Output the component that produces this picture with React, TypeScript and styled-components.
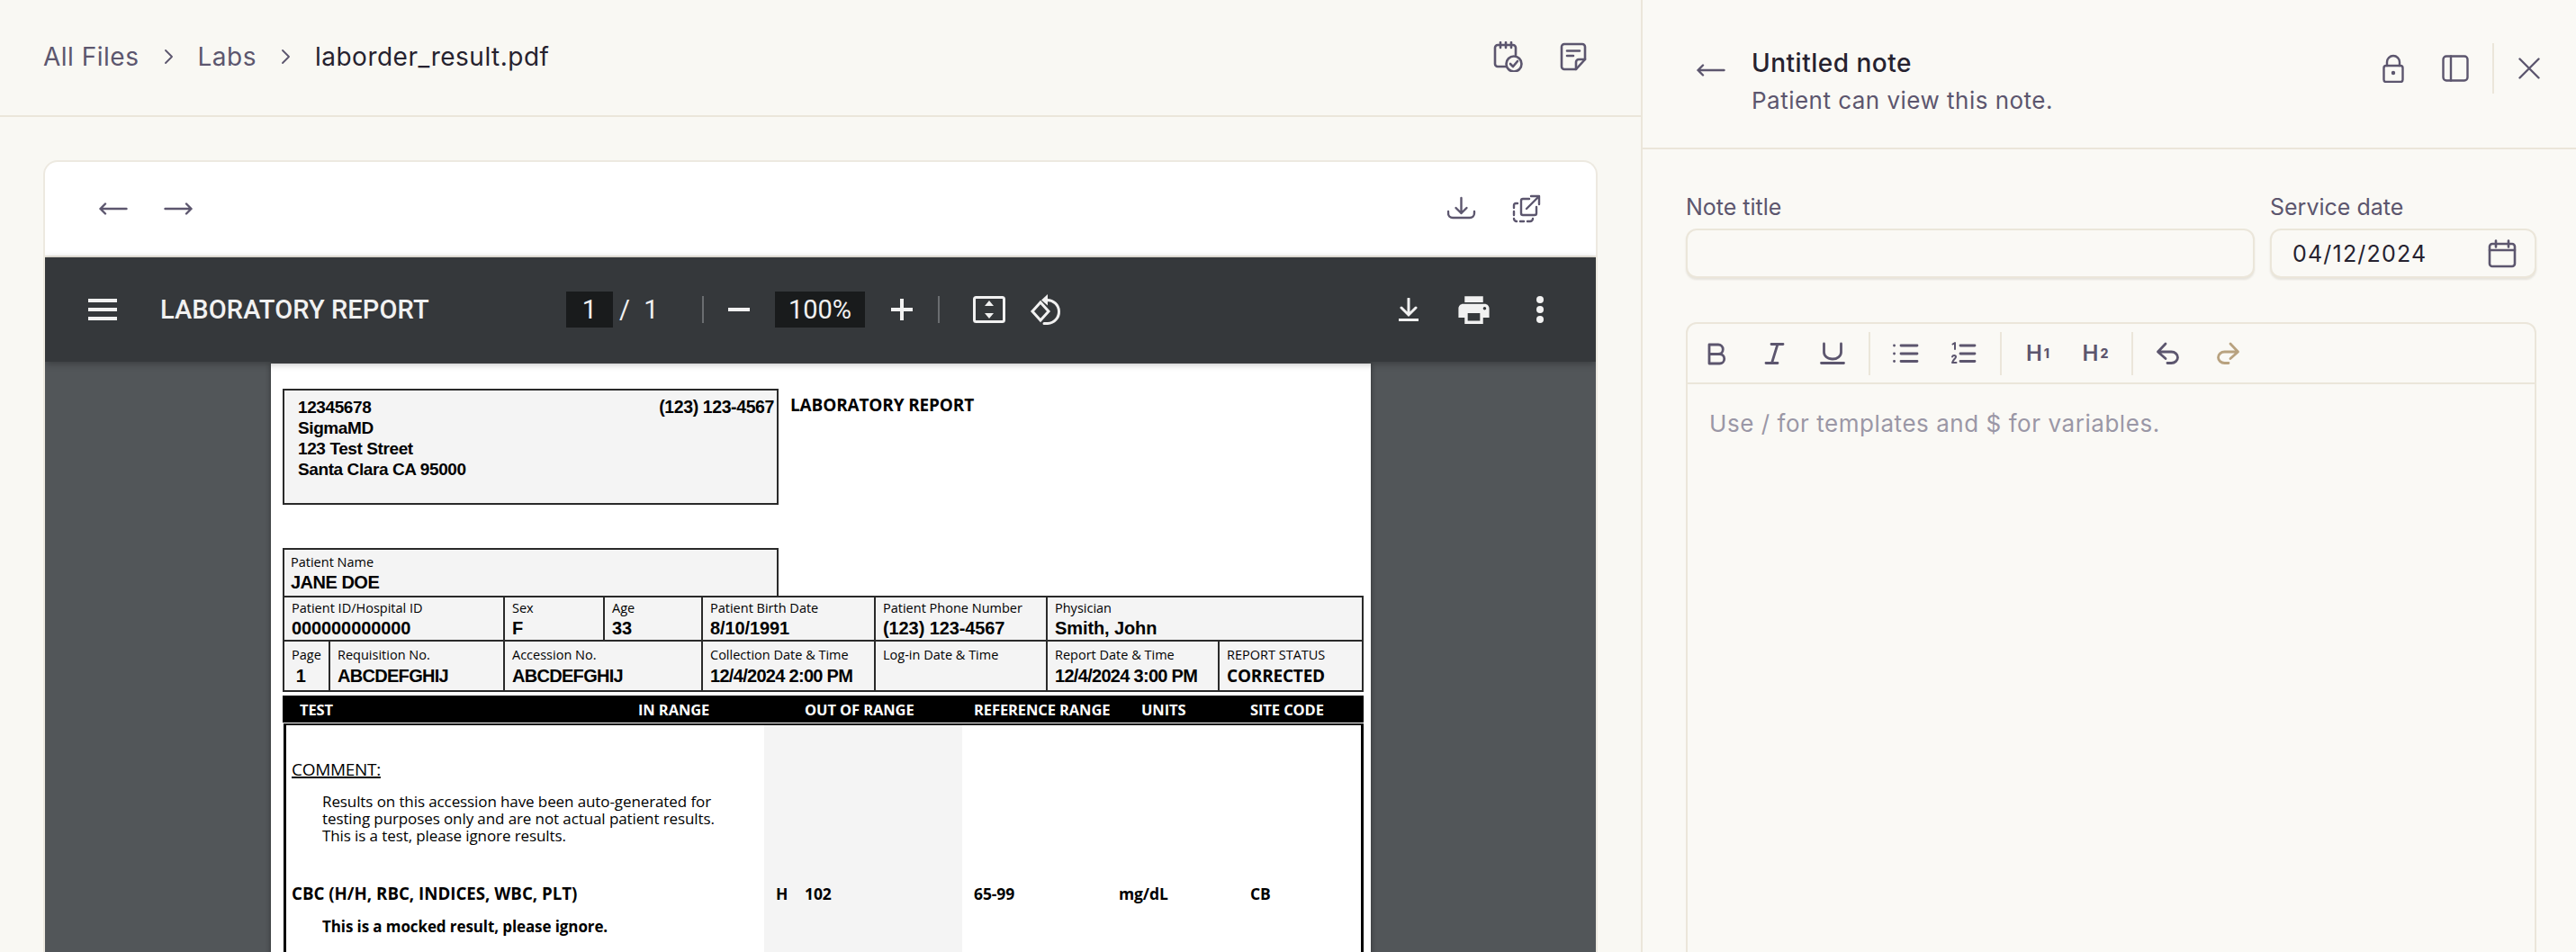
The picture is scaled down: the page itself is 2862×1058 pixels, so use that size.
import React from "react";
import styled, { createGlobalStyle } from "styled-components";

const colors = {
  paneLeft: "#f9f8f3",
  paneRight: "#faf9f5",
  line: "#ebe6da",
  ink: "#26222f",
  muted: "#5c566e",
  hint: "#9a97a6",
  redo: "#b8a27f",
  bar: "#35383b",
  well: "#191b1c",
  viewer: "#525659",
  paper: "#f4f4f4",
  rule: "#2a2a2a",
};

const GlobalStyle = createGlobalStyle`
  html, body {
    margin: 0;
    padding: 0;
    overflow: hidden;
    background: ${colors.paneRight};
    font-family: Inter, "Liberation Sans", sans-serif;
  }
  * { box-sizing: border-box; }
`;

const Page = styled.div`
  display: flex;
  width: 2862px;
  height: 1058px;
  overflow: hidden;
`;

const LeftPane = styled.main`
  display: flex;
  flex-direction: column;
  width: 1823px;
  flex: none;
  background: ${colors.paneLeft};
`;

const FileHeader = styled.header`
  display: flex;
  align-items: center;
  justify-content: space-between;
  height: 130px;
  flex: none;
  padding: 0 59px 2px 48px;
  border-bottom: 2px solid ${colors.line};
`;

const Crumbs = styled.nav`
  display: flex;
  align-items: center;
  gap: 27.5px;
  font-size: 28px;
  letter-spacing: 0.5px;
  color: ${colors.muted};
`;

const Current = styled.span`
  color: ${colors.ink};
`;

const IconRow = styled.div<{ $gap: number }>`
  display: flex;
  align-items: center;
  gap: ${(p) => p.$gap}px;
  color: ${colors.muted};
`;

const Glyph = styled.svg<{ $ml?: number; $wide?: number }>`
  display: block;
  flex: none;
  fill: none;
  stroke: currentColor;
  stroke-width: ${(p) => p.$wide ?? 2.4};
  stroke-linecap: round;
  stroke-linejoin: round;
  margin-left: ${(p) => p.$ml ?? 0}px;
`;

const Card = styled.section`
  display: flex;
  flex-direction: column;
  flex: 1;
  min-height: 0;
  width: 1727px;
  margin: 48px 0 0 48px;
  border: 2px solid #ede9e0;
  border-bottom: 0;
  border-radius: 16px 16px 0 0;
  background: #fff;
  overflow: hidden;
`;

const CardBar = styled.div`
  display: flex;
  align-items: center;
  justify-content: space-between;
  height: 106px;
  flex: none;
  padding: 0 61px 0 60px;
  border-bottom: 2px solid #ede9e0;
  color: ${colors.muted};
`;

const PdfBar = styled.div`
  position: relative;
  z-index: 1;
  display: flex;
  align-items: center;
  height: 116px;
  flex: none;
  padding: 0 57px 0 48px;
  background: ${colors.bar};
  color: #f1f1f1;
  font-family: Roboto, sans-serif;
  box-shadow: 0 2px 8px rgba(0, 0, 0, 0.3);
`;

const PdfTitle = styled.div`
  width: 451px;
  margin-left: 48px;
  flex: none;
  font-size: 29px;
  font-weight: 500;
  letter-spacing: 0.1px;
`;

const Well = styled.div<{ $w: number; $ml?: number }>`
  display: flex;
  align-items: center;
  justify-content: center;
  flex: none;
  width: ${(p) => p.$w}px;
  height: 40px;
  margin-left: ${(p) => p.$ml ?? 0}px;
  background: ${colors.well};
  font-size: 29px;
`;

const PageOf = styled.div`
  width: 99px;
  padding-left: 7px;
  flex: none;
  font-size: 29px;
  word-spacing: 8px;
`;

const BarRule = styled.div<{ $ml?: number }>`
  width: 2px;
  height: 30px;
  flex: none;
  margin-left: ${(p) => p.$ml ?? 0}px;
  background: #6a6d70;
`;

const BarEnd = styled.div`
  display: flex;
  align-items: center;
  margin-left: auto;
`;

const Viewer = styled.div`
  flex: 1;
  min-height: 0;
  padding: 2px 0 0 251px;
  background: ${colors.viewer};
  overflow: hidden;
`;

const Sheet = styled.article`
  width: 1222px;
  height: 700px;
  padding: 28px 8px 0 13px;
  background: #fff;
  color: #000;
  box-shadow: 0 0 6px rgba(0, 0, 0, 0.4);
`;

const SheetTop = styled.div`
  display: flex;
  align-items: flex-start;
`;

const AddressBox = styled.div`
  display: flex;
  justify-content: space-between;
  width: 551px;
  height: 129px;
  flex: none;
  padding: 7px 3px 0 15px;
  border: 2px solid ${colors.rule};
  background: ${colors.paper};
`;

const Bold = styled.div<{ $size?: number; $track?: number }>`
  font-family: "Liberation Sans", Arial, sans-serif;
  font-weight: 700;
  font-size: ${(p) => p.$size ?? 19}px;
  line-height: 23px;
  letter-spacing: ${(p) => p.$track ?? -0.4}px;
  white-space: nowrap;
`;

const ReportHeading = styled.div`
  margin: 6px 0 0 13px;
  font-family: "Open Sans", sans-serif;
  font-size: 19px;
  font-weight: 700;
  line-height: 24px;
  letter-spacing: -0.15px;
`;

const NameBox = styled.div`
  width: 551px;
  height: 53px;
  margin-top: 48px;
  padding: 3px 0 0 7px;
  border: 2px solid ${colors.rule};
  border-bottom: 0;
  background: ${colors.paper};
`;

const InfoRow = styled.div<{ $h: number; $first?: boolean }>`
  display: flex;
  width: 1201px;
  height: ${(p) => p.$h}px;
  border: 2px solid ${colors.rule};
  border-top-width: ${(p) => (p.$first ? 2 : 0)}px;
  background: ${colors.paper};
`;

const InfoCell = styled.div<{ $w?: number; $last?: boolean; $top: number }>`
  width: ${(p) => (p.$w ? `${p.$w}px` : "auto")};
  flex: ${(p) => (p.$w ? "none" : 1)};
  padding: ${(p) => p.$top}px 0 0 8px;
  border-right: ${(p) => (p.$last ? 0 : 2)}px solid ${colors.rule};
  overflow: hidden;
`;

const CellLabel = styled.div<{ $lh?: number }>`
  font-family: "Open Sans", sans-serif;
  font-size: 14.5px;
  line-height: ${(p) => p.$lh ?? 22}px;
  white-space: nowrap;
`;

const CellStatus = styled.div`
  font-family: "Open Sans", sans-serif;
  font-size: 19px;
  font-weight: 700;
  line-height: 23px;
  letter-spacing: -0.2px;
`;

const ResultHead = styled.div`
  display: grid;
  grid-template-columns: 376px 185px 188px 186px 121px 1fr;
  align-items: center;
  width: 1201px;
  height: 30px;
  margin-top: 4px;
  padding-left: 19px;
  background: #000;
  color: #fff;
  font-family: "Open Sans", sans-serif;
  font-size: 16.5px;
  font-weight: 700;
  letter-spacing: -0.1px;
`;

const ResultBody = styled.div`
  width: 1200px;
  height: 280px;
  margin: 1px 0 0 1px;
  padding: 37px 0 0 6px;
  border: 3px solid #000;
  border-top-width: 2px;
  border-bottom: 0;
  background: linear-gradient(
    to right,
    #fff 531px,
    ${colors.paper} 531px,
    ${colors.paper} 751px,
    #fff 751px
  );
  font-family: "Open Sans", sans-serif;
`;

const CommentTitle = styled.div`
  font-size: 19px;
  line-height: 24px;
  text-decoration: underline;
  text-decoration-thickness: 2px;
  letter-spacing: -0.3px;
`;

const CommentText = styled.p`
  margin: 14px 0 43px 34px;
  font-size: 17px;
  line-height: 19px;
  letter-spacing: -0.1px;
`;

const ResultRow = styled.div`
  display: grid;
  grid-template-columns: 538px 32px 188px 161px 146px 1fr;
  font-size: 17.5px;
  font-weight: 700;
  line-height: 24px;
  letter-spacing: -0.1px;
`;

const ResultName = styled.span`
  font-size: 18.7px;
  letter-spacing: 0;
`;

const ResultNote = styled.div`
  margin: 13px 0 0 34px;
  font-size: 17px;
  font-weight: 700;
  line-height: 24px;
  letter-spacing: -0.1px;
`;

const NotePane = styled.aside`
  display: flex;
  flex-direction: column;
  flex: 1;
  min-width: 0;
  border-left: 2px solid ${colors.line};
  background: ${colors.paneRight};
`;

const NoteHeader = styled.header`
  display: flex;
  align-items: flex-start;
  height: 166px;
  flex: none;
  padding: 48px 40px 0 60px;
  border-bottom: 2px solid ${colors.line};
  color: ${colors.muted};
`;

const BackSlot = styled.div`
  width: 61px;
  padding-top: 22px;
  flex: none;
`;

const NoteTitle = styled.div`
  margin-top: 4px;
  color: ${colors.ink};
  font-size: 28px;
  font-weight: 500;
  line-height: 36px;
  letter-spacing: 0.5px;
`;

const NoteSub = styled.div`
  margin-top: 6px;
  font-size: 26px;
  line-height: 36px;
  letter-spacing: 0.48px;
`;

const NoteActions = styled.div`
  display: flex;
  align-items: center;
  height: 56px;
  margin-left: auto;
`;

const ActionRule = styled.div`
  width: 2px;
  height: 56px;
  margin: 0 27px 0 26px;
  background: ${colors.line};
`;

const NoteForm = styled.form`
  display: flex;
  flex-direction: column;
  flex: 1;
  min-height: 0;
  padding: 48px 44px 0 48px;
`;

const FieldGrid = styled.div`
  display: grid;
  grid-template-columns: 632px 296px;
  column-gap: 17px;
`;

const FieldLabel = styled.label`
  display: block;
  margin-bottom: 8px;
  color: ${colors.muted};
  font-size: 25px;
  line-height: 32px;
`;

const fieldChrome = `
  width: 100%;
  height: 55px;
  border: 2px solid ${colors.line};
  border-radius: 12px;
  background: ${colors.paneRight};
  box-shadow: 0 2px 2px rgba(120, 105, 80, 0.14);
`;

const TextField = styled.input`
  ${fieldChrome}
  display: block;
  outline: 0;
`;

const DateField = styled.div`
  ${fieldChrome}
  display: flex;
  align-items: center;
  justify-content: space-between;
  padding: 0 20px 0 23px;
  color: ${colors.ink};
  font-size: 25px;
  letter-spacing: 1.2px;
`;

const Editor = styled.div`
  flex: 1;
  margin-top: 49px;
  margin-bottom: -20px;
  border: 2px solid ${colors.line};
  border-radius: 12px 12px 0 0;
`;

const EditorBar = styled.div`
  display: flex;
  align-items: center;
  height: 67px;
  padding-left: 1px;
  border-bottom: 2px solid ${colors.line};
  color: ${colors.muted};
`;

const BarButton = styled.button<{ $off?: boolean }>`
  display: flex;
  align-items: center;
  justify-content: center;
  width: 64px;
  height: 48px;
  flex: none;
  padding: 0;
  border: 0;
  background: none;
  color: ${(p) => (p.$off ? colors.redo : colors.muted)};
  font-family: Inter, sans-serif;
  font-size: 24px;
  font-weight: 600;
  line-height: 1;

  sub {
    margin-left: 2px;
    font-size: 14px;
    font-weight: 800;
    vertical-align: baseline;
  }
`;

const BarSep = styled.div`
  width: 2px;
  height: 48px;
  flex: none;
  margin: 0 8px;
  background: ${colors.line};
`;

const EditorBody = styled.div`
  padding: 26px 0 0 24px;
  color: ${colors.hint};
  font-size: 26px;
  line-height: 36px;
  letter-spacing: 0.55px;
`;

const rowOne: [string, string, number?][] = [
  ["Patient ID/Hospital ID", "000000000000", 245],
  ["Sex", "F", 111],
  ["Age", "33", 109],
  ["Patient Birth Date", "8/10/1991", 192],
  ["Patient Phone Number", "(123) 123-4567", 191],
  ["Physician", "Smith, John"],
];

const rowTwo: [string, string, number][] = [
  ["Page", "\u00a01", 51],
  ["Requisition No.", "ABCDEFGHIJ", 194],
  ["Accession No.", "ABCDEFGHIJ", 220],
  ["Collection Date & Time", "12/4/2024 2:00 PM", 192],
  ["Log-in Date & Time", "", 191],
  ["Report Date & Time", "12/4/2024 3:00 PM", 191],
];

const App = () => {
  return (
    <Page>
      <GlobalStyle />
      <LeftPane>
        <FileHeader>
          <Crumbs>
            <span>All Files</span>
            <Glyph width="10" height="18" viewBox="0 0 10 18" $wide={1.8}>
              <path d="M2 2l7 7-7 7" />
            </Glyph>
            <span>Labs</span>
            <Glyph width="10" height="18" viewBox="0 0 10 18" $wide={1.8}>
              <path d="M2 2l7 7-7 7" />
            </Glyph>
            <Current>laborder_result.pdf</Current>
          </Crumbs>
          <IconRow $gap={40}>
            <Glyph width="34" height="34" viewBox="0 0 34 34" $wide={2.6}>
              <path d="M15 28H6a3 3 0 0 1-3-3V7a3 3 0 0 1 3-3h17a3 3 0 0 1 3 3v8" />
              <path d="M9 1v6M15 1v6M21 1v6" />
              <circle cx="24" cy="25" r="8.5" />
              <path d="M20 25l3 3 5-6" />
            </Glyph>
            <Glyph width="32" height="32" viewBox="0 0 32 32" $wide={2.6}>
              <path d="M19 30H6a3 3 0 0 1-3-3V5a3 3 0 0 1 3-3h20a3 3 0 0 1 3 3v14z" />
              <path d="M29 19h-7a3 3 0 0 0-3 3v8" />
              <path d="M9 9.5h14M9 15h7" />
            </Glyph>
          </IconRow>
        </FileHeader>

        <Card>
          <CardBar>
            <IconRow $gap={40}>
              <Glyph width="32" height="16" viewBox="0 0 32 16">
                <path d="M1.5 8h29M7 2.5L1.5 8 7 13.5" />
              </Glyph>
              <Glyph width="32" height="16" viewBox="0 0 32 16">
                <path d="M1.5 8h29M25 2.5L30.5 8 25 13.5" />
              </Glyph>
            </IconRow>
            <IconRow $gap={40}>
              <Glyph width="32" height="28" viewBox="0 0 32 28">
                <path d="M15.5 2v17M9.500 13l6 6 6-6" />
                <path d="M1 17v2a5 5 0 0 0 5 5h19a5 5 0 0 0 5-5v-2" />
              </Glyph>
              <Glyph width="32" height="32" viewBox="0 0 32 32">
                <path d="M19 5h-7a2 2 0 0 0-2 2v14a2 2 0 0 0 2 2h13a2 2 0 0 0 2-2v-7" />
                <path d="M16 16L30 2M21 2h9v9" />
                <path d="M6 10H4a2 2 0 0 0-2 2v3M2 19v4M2 27a3 3 0 0 0 3 3M9 30h4M17 30h3a3 3 0 0 0 3-3" />
              </Glyph>
            </IconRow>
          </CardBar>

          <PdfBar>
            <Glyph width="32" height="24" viewBox="0 0 32 24" $wide={4}>
              <path d="M0 2h32M0 12h32M0 22h32" strokeLinecap="butt" />
            </Glyph>
            <PdfTitle>LABORATORY REPORT</PdfTitle>
            <Well $w={52}>1</Well>
            <PageOf>/ 1</PageOf>
            <BarRule />
            <Glyph width="24" height="4" viewBox="0 0 24 4" $ml={27} $wide={4}>
              <path d="M0 2h24" strokeLinecap="butt" />
            </Glyph>
            <Well $w={100} $ml={28}>100%</Well>
            <Glyph width="24" height="24" viewBox="0 0 24 24" $ml={29} $wide={4}>
              <path d="M0 12h24M12 0v24" strokeLinecap="butt" />
            </Glyph>
            <BarRule $ml={28} />
            <Glyph width="36" height="30" viewBox="0 0 36 30" $ml={37} $wide={3}>
              <rect x="1.5" y="1.5" width="33" height="27" rx="2" />
              <path d="M18 5l5 6H13zM18 25l5-6H13z" fill="currentColor" stroke="none" />
            </Glyph>
            <Glyph width="36" height="36" viewBox="0 0 36 36" $ml={27} $wide={3}>
              <path d="M12 10l9 10-9 10-9-10z" strokeLinejoin="miter" />
              <path d="M19 7.5a13 13 0 0 1 1 26h-4" />
              <path d="M20 1l-7 6.500 7 6z" fill="currentColor" stroke="none" />
            </Glyph>
            <BarEnd>
              <Glyph width="24" height="26" viewBox="0 0 24 26" $wide={3}>
                <path d="M12 1v17M4 11l8 8 8-8" strokeLinejoin="miter" />
                <path d="M1 24.500h22" strokeLinecap="butt" />
              </Glyph>
              <Glyph width="41" height="41" viewBox="0 0 24 24" $ml={40} $wide={0}>
                <path
                  fill="currentColor"
                  d="M19 8H5c-1.660 0-3 1.340-3 3v6h4v4h12v-4h4v-6c0-1.660-1.340-3-3-3zm-3 11H8v-5h8v5zm3-7c-.55 0-1-.45-1-1s.45-1 1-1 1 .45 1 1-.45 1-1 1zm-1-9H6v4h12V3z"
                />
              </Glyph>
              <Glyph width="10" height="30" viewBox="0 0 10 30" $ml={48} $wide={0}>
                <circle cx="5" cy="4" r="4" fill="currentColor" />
                <circle cx="5" cy="15" r="4" fill="currentColor" />
                <circle cx="5" cy="26" r="4" fill="currentColor" />
              </Glyph>
            </BarEnd>
          </PdfBar>

          <Viewer>
            <Sheet>
              <SheetTop>
                <AddressBox>
                  <div>
                    <Bold>12345678</Bold>
                    <Bold>SigmaMD</Bold>
                    <Bold>123 Test Street</Bold>
                    <Bold>Santa Clara CA 95000</Bold>
                  </div>
                  <Bold $size={19.5}>(123) 123-4567</Bold>
                </AddressBox>
                <ReportHeading>LABORATORY REPORT</ReportHeading>
              </SheetTop>

              <NameBox>
                <CellLabel>Patient Name</CellLabel>
                <Bold $size={20} $track={-0.5}>JANE DOE</Bold>
              </NameBox>

              <InfoRow $h={51} $first>
                {rowOne.map(([label, value, w], i) => (
                  <InfoCell key={label} $w={w} $top={1} $last={i === rowOne.length - 1}>
                    <CellLabel>{label}</CellLabel>
                    <Bold $size={20} $track={-0.1}>{value}</Bold>
                  </InfoCell>
                ))}
              </InfoRow>
              <InfoRow $h={56}>
                {rowTwo.map(([label, value, w]) => (
                  <InfoCell key={label} $w={w} $top={3}>
                    <CellLabel $lh={24}>{label}</CellLabel>
                    <Bold $size={20} $track={-0.7}>{value}</Bold>
                  </InfoCell>
                ))}
                <InfoCell $last $top={3}>
                  <CellLabel $lh={24}>REPORT STATUS</CellLabel>
                  <CellStatus>CORRECTED</CellStatus>
                </InfoCell>
              </InfoRow>

              <ResultHead>
                <span>TEST</span>
                <span>IN RANGE</span>
                <span>OUT OF RANGE</span>
                <span>REFERENCE RANGE</span>
                <span>UNITS</span>
                <span>SITE CODE</span>
              </ResultHead>
              <ResultBody>
                <CommentTitle>COMMENT:</CommentTitle>
                <CommentText>
                  Results on this accession have been auto-generated for
                  <br />
                  testing purposes only and are not actual patient results.
                  <br />
                  This is a test, please ignore results.
                </CommentText>
                <ResultRow>
                  <ResultName>CBC (H/H, RBC, INDICES, WBC, PLT)</ResultName>
                  <span>H</span>
                  <span>102</span>
                  <span>65-99</span>
                  <span>mg/dL</span>
                  <span>CB</span>
                </ResultRow>
                <ResultNote>This is a mocked result, please ignore.</ResultNote>
              </ResultBody>
            </Sheet>
          </Viewer>
        </Card>
      </LeftPane>

      <NotePane>
        <NoteHeader>
          <BackSlot>
            <Glyph width="32" height="16" viewBox="0 0 32 16">
              <path d="M1.5 8h29M7 2.500L1.5 8 7 13.500" />
            </Glyph>
          </BackSlot>
          <div>
            <NoteTitle>Untitled note</NoteTitle>
            <NoteSub>Patient can view this note.</NoteSub>
          </div>
          <NoteActions>
            <Glyph width="24" height="32" viewBox="0 0 24 32">
              <rect x="1.500" y="13" width="21" height="18" rx="2.500" />
              <path d="M5 13V9a7 7 0 0 1 14 0v4" />
              <circle cx="12" cy="21" r="1" fill="currentColor" />
            </Glyph>
            <Glyph width="30" height="30" viewBox="0 0 30 30" $ml={42}>
              <rect x="1.500" y="1.500" width="27" height="27" rx="3.500" />
              <path d="M10 1.500v27" />
            </Glyph>
            <ActionRule />
            <Glyph width="24" height="24" viewBox="0 0 24 24">
              <path d="M1.500 1.500l21 21M22.500 1.500l-21 21" />
            </Glyph>
          </NoteActions>
        </NoteHeader>

        <NoteForm>
          <FieldGrid>
            <div>
              <FieldLabel htmlFor="note-title">Note title</FieldLabel>
              <TextField id="note-title" />
            </div>
            <div>
              <FieldLabel>Service date</FieldLabel>
              <DateField>
                04/12/2024
                <IconRow $gap={0}>
                  <Glyph width="32" height="32" viewBox="0 0 32 32" $wide={2.600}>
                    <rect x="2" y="5" width="28" height="25" rx="3" />
                    <path d="M2 12h28M9 1.500v7M23 1.500v7" />
                  </Glyph>
                </IconRow>
              </DateField>
            </div>
          </FieldGrid>

          <Editor>
            <EditorBar>
              <BarButton type="button">
                <Glyph width="32" height="32" viewBox="0 0 32 32" $wide={2.800}>
                  <path d="M7 6h10a5.250 5.250 0 0 1 0 10.500H7zM7 16.500h11.500a5.250 5.250 0 0 1 0 10.500H7z" />
                </Glyph>
              </BarButton>
              <BarButton type="button">
                <Glyph width="32" height="32" viewBox="0 0 32 32" $wide={2.800}>
                  <path d="M12 5.500h13M6 26.500h13M19 5.500l-6.500 21" />
                </Glyph>
              </BarButton>
              <BarButton type="button">
                <Glyph width="32" height="32" viewBox="0 0 32 32" $wide={2.800}>
                  <path d="M6.500 5v9.500a9.500 7.500 0 0 0 19 0V5M3.500 26.500h25" />
                </Glyph>
              </BarButton>
              <BarSep />
              <BarButton type="button">
                <Glyph width="32" height="32" viewBox="0 0 32 32" $wide={2.800}>
                  <path d="M10 7h18M10 16h18M10 24.500h18M2.500 7h.1M2.500 16h.1M2.500 24.500h.1" />
                </Glyph>
              </BarButton>
              <BarButton type="button">
                <Glyph width="32" height="32" viewBox="0 0 32 32" $wide={2.800}>
                  <path d="M12 7h16M12 16h16M12 24.500h16" />
                  <path d="M3.500 5.500L6 4v7M3 19.500c.5-2 4-2 4 .2 0 1.500-3 2.800-4 6.300h4.500" strokeWidth="2" />
                </Glyph>
              </BarButton>
              <BarSep />
              <BarButton type="button">
                H<sub>1</sub>
              </BarButton>
              <BarButton type="button">
                H<sub>2</sub>
              </BarButton>
              <BarSep />
              <BarButton type="button">
                <Glyph width="32" height="32" viewBox="0 0 32 32" $wide={2.800}>
                  <path d="M12 5L3.500 14l8.500 7.500M3.500 14h15a7 6.250 0 0 1 0 12.500H14" />
                </Glyph>
              </BarButton>
              <BarButton type="button" $off>
                <Glyph width="32" height="32" viewBox="0 0 32 32" $wide={2.800}>
                  <path d="M20 5l8.500 9-8.500 7.500M28.500 14h-15a7 6.250 0 0 0 0 12.500H18" />
                </Glyph>
              </BarButton>
            </EditorBar>
            <EditorBody>Use / for templates and $ for variables.</EditorBody>
          </Editor>
        </NoteForm>
      </NotePane>
    </Page>
  );
};

export default App;
